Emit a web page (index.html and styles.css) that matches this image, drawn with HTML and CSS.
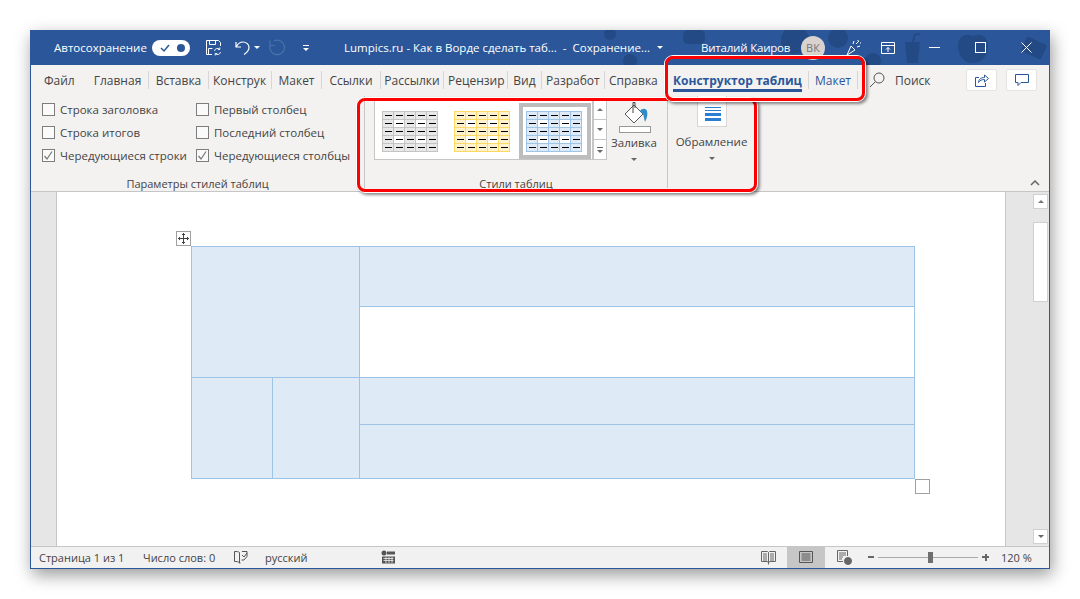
FILE: index.html
```html
<!DOCTYPE html>
<html lang="ru">

<head>
    <meta charset="UTF-8">
    <title>Lumpics.ru - Как в Ворде сделать таблицу</title>
    <link rel="stylesheet" href="styles.css">
</head>

<body>
    <div class="window">
        <!-- title bar -->
        <div class="titlebar">
            <svg class="doodles" width="460" height="35" viewBox="0 0 460 35">
                <g fill="#244a85">
                    <rect x="93" y="0" width="22" height="14" rx="5"/>
                    <circle cx="40" cy="31" r="7"/>
                    <circle cx="20" cy="4" r="6"/>
                    <circle cx="205" cy="10" r="14"/>
                    <circle cx="248" cy="8" r="10"/>
                    <circle cx="283" cy="31" r="8"/>
                    <path d="M315 12h15l-2 21h-11zM322 12l2-8 6-1 .5 1.500-5 1-1.500 6.500z"/>
                    <path d="M383 6c9-4 16 2 15 12-1 9-7 15-15 15s-14-6-15-15c-1-10 6-16 15-12z"/>
                    <rect x="433" y="10" width="22" height="16" rx="2" transform="rotate(25 444 18)"/>
                </g>
            </svg>
            <span class="autosave">Автосохранение</span>
            <span class="toggle">
                <svg width="12" height="10" viewBox="0 0 12 10"><path d="M2 5l3 3 5-6" fill="none" stroke="#2b579a" stroke-width="1.500"/></svg>
                <i class="toggle-dot"></i>
            </span>
            <svg class="qa-save" width="17" height="17" viewBox="0 0 17 17" fill="none" stroke="#fff">
                <path d="M7 15.500H1.500v-14h12l2 2V7M4.500 1.500v4h6v-4M3.500 15.500V9.500h4"/>
                <path d="M9.500 12a3 3 0 0 1 5.200-1.600M15.500 13a3 3 0 0 1-5.200 1.600M14.800 8.500v2h-2M10.200 16.500v-2h2" stroke-width=".9"/>
            </svg>
            <svg class="qa-undo" width="16" height="16" viewBox="0 0 16 16" fill="none" stroke="#fff" stroke-width="1.200">
                <path d="M1 2v5h5M1.500 6.500C3 3.500 5.500 2 8 2c3.500 0 6 2.500 6 5.500 0 3-2 5-5 7"/>
            </svg>
            <i class="caret caret-white qa-caret"></i>
            <svg class="qa-redo" width="18" height="17" viewBox="0 0 18 17" fill="none" stroke="#4a72ab" stroke-width="1.200">
                <path d="M6 1.800A7.300 7.300 0 1 1 2 7M2 1.500v5h5"/>
            </svg>
            <span class="qa-custom"><i class="dash"></i><i class="caret caret-white"></i></span>
            <span class="doc-title">Lumpics.ru - Как в Ворде сделать таб...&nbsp; - &nbsp;Сохранение...</span>
            <i class="caret caret-white title-caret"></i>
            <span class="user">Виталий Каиров</span>
            <span class="avatar">ВК</span>
            <svg class="tb-wand" width="16" height="17" viewBox="0 0 16 17" fill="none" stroke="#fff">
                <path d="M1 16l4-9 4 4zM7 5l1-3M11 8l3-1M10 5l3-3M12 1v1M15 4h-1"/>
            </svg>
            <svg class="tb-display" width="14" height="12" viewBox="0 0 14 12" fill="none" stroke="#fff">
                <path d="M.5.500h13v11H.5zM.5 3.500h13M7 10V5.500M5 7.500l2-2 2 2"/>
            </svg>
            <i class="tb-min"></i>
            <i class="tb-max"></i>
            <svg class="tb-close" width="11" height="11" viewBox="0 0 11 11" stroke="#fff"><path d="M.5.500l10 10M10.500.500l-10 10"/></svg>
        </div>

        <!-- tabs -->
        <div class="tabs">
            <div class="tabs-list">
                <a class="tab tab-plain tab-file">Файл</a>
                <a class="tab">Главная</a>
                <a class="tab">Вставка</a>
                <a class="tab tab-cut">Конструк</a>
                <a class="tab">Макет</a>
                <a class="tab">Ссылки</a>
                <a class="tab">Рассылки</a>
                <a class="tab tab-cut">Рецензир</a>
                <a class="tab">Вид</a>
                <a class="tab tab-cut">Разработ</a>
                <a class="tab tab-plain">Справка</a>
                <a class="tab tab-context"><b>Конструктор таблиц</b></a>
                <a class="tab tab-blue">Макет</a>
            </div>
            <svg class="search-icon" width="16" height="16" viewBox="0 0 16 16" fill="none" stroke="#555">
                <circle cx="10" cy="6" r="5"/><path d="M6.500 9.500L1 15"/>
            </svg>
            <span class="search-text">Поиск</span>
            <span class="tab-btn tab-btn-share">
                <svg width="16" height="15" viewBox="0 0 16 15" fill="none" stroke="#2b579a">
                    <path d="M5 4.500H1.500v9h10V10M4.500 9.500c0-3 2.500-5 6-5V2l4 3.500-4 3.500V6.500c-3 0-4.500 1-6 3z"/>
                </svg>
            </span>
            <span class="tab-btn tab-btn-comment">
                <svg width="14" height="13" viewBox="0 0 14 13" fill="none" stroke="#2b579a">
                    <path d="M.5.500h13v8H6l-3 3v-3H.5z"/>
                </svg>
            </span>
        </div>

        <!-- ribbon -->
        <div class="ribbon">
            <div class="group group-options">
                <div class="options">
                    <label class="opt"><i class="box"></i>Строка заголовка</label>
                    <label class="opt"><i class="box"></i>Первый столбец</label>
                    <label class="opt"><i class="box"></i>Строка итогов</label>
                    <label class="opt"><i class="box"></i>Последний столбец</label>
                    <label class="opt"><i class="box box-on"><svg width="11" height="11" viewBox="0 0 11 11"><path d="M1.500 6l2.500 3 5-7.500" fill="none" stroke="#777" stroke-width="1.200"/></svg></i>Чередующиеся строки</label>
                    <label class="opt"><i class="box box-on"><svg width="11" height="11" viewBox="0 0 11 11"><path d="M1.500 6l2.500 3 5-7.500" fill="none" stroke="#777" stroke-width="1.200"/></svg></i>Чередующиеся столбцы</label>
                </div>
                <div class="group-label">Параметры стилей таблиц</div>
            </div>

            <div class="group group-styles">
                <div class="styles-body">
                    <div class="gallery">
                        <div class="gal-item">
                            <div class="swatch swatch-gray"><i></i><i></i><i></i><i></i><i></i><i></i><i></i><i></i><i></i><i></i><i></i><i></i><i></i><i></i><i></i><i></i><i></i><i></i><i></i><i></i><i></i><i></i><i></i><i></i><i></i></div>
                        </div>
                        <div class="gal-item">
                            <div class="swatch swatch-gold"><i></i><i></i><i></i><i></i><i></i><i></i><i></i><i></i><i></i><i></i><i></i><i></i><i></i><i></i><i></i><i></i><i></i><i></i><i></i><i></i><i></i><i></i><i></i><i></i><i></i></div>
                        </div>
                        <div class="gal-item gal-item-on">
                            <div class="swatch swatch-blue"><i></i><i></i><i></i><i></i><i></i><i></i><i></i><i></i><i></i><i></i><i></i><i></i><i></i><i></i><i></i><i></i><i></i><i></i><i></i><i></i><i></i><i></i><i></i><i></i><i></i></div>
                        </div>
                    </div>
                    <div class="gal-scroll">
                        <span class="gal-btn"><i class="caret caret-up"></i></span>
                        <span class="gal-btn"><i class="caret"></i></span>
                        <span class="gal-btn gal-btn-more"><i class="dash dash-gray"></i><i class="caret"></i></span>
                    </div>
                    <div class="fill-btn">
                        <svg width="36" height="36" viewBox="0 0 36 36">
                            <path d="M18 6l9 9-9 9-9-9z" fill="#fff" stroke="#555"/>
                            <path d="M17 3.500V14M19 3.500V9M17 3.500h2" fill="none" stroke="#444"/>
                            <path d="M24 12c2-3 6-3 7 0 1 3 0 7-2 11-1-3-1-6-2-8-1-1-2-1-3-3z" fill="#2e8ccb"/>
                            <rect x="3.500" y="27.500" width="31" height="6" fill="#fff" stroke="#999"/>
                        </svg>
                        <span>Заливка</span>
                        <i class="caret"></i>
                    </div>
                </div>
                <div class="group-label">Стили таблиц</div>
            </div>

            <div class="group group-borders">
                <div class="border-btn">
                    <span class="border-icon"><i></i><i></i><i class="thick"></i><i class="thick"></i></span>
                    <span>Обрамление</span>
                    <i class="caret"></i>
                </div>
            </div>

            <svg class="collapse" width="10" height="6" viewBox="0 0 10 6" fill="none" stroke="#666" stroke-width="1.500"><path d="M1 5l4-4 4 4"/></svg>
        </div>

        <!-- document -->
        <div class="doc">
            <div class="page">
                <div class="table-wrap">
                    <span class="move-handle">
                        <svg width="11" height="11" viewBox="0 0 11 11" fill="none" stroke="#444"><path d="M5.500 0v11M0 5.500h11M4 1.500h3M4 9.500h3M1.500 4v3M9.500 4v3"/></svg>
                    </span>
                    <table class="word-table">
                        <colgroup><col class="c1"><col class="c2"><col class="c3"></colgroup>
                        <tr class="r1"><td class="shade" colspan="2" rowspan="2"></td><td class="shade"></td></tr>
                        <tr class="r2"><td></td></tr>
                        <tr class="r3"><td class="shade" rowspan="2"></td><td class="shade" rowspan="2"></td><td class="shade"></td></tr>
                        <tr class="r4"><td class="shade"></td></tr>
                    </table>
                    <span class="size-handle"></span>
                </div>
            </div>
            <div class="scroll">
                <span class="scroll-btn"><i class="caret caret-up"></i></span>
                <span class="scroll-thumb"></span>
                <span class="scroll-btn scroll-btn-down"><i class="caret"></i></span>
            </div>
        </div>

        <!-- status bar -->
        <div class="status">
            <span class="st-page">Страница 1 из 1</span>
            <span class="st-words">Число слов: 0</span>
            <svg class="st-proof" width="15" height="14" viewBox="0 0 15 14" fill="none" stroke="#555">
                <path d="M6.500 2.500c-1-1-3-1-5-1v10c2 0 4 0 5 1.500v-10.500zM6.500 13h1M9 1.500h5v5L11 10H8.500M9 5l2 2 3-4"/>
            </svg>
            <span class="st-lang">русский</span>
            <svg class="st-macro" width="14" height="14" viewBox="0 0 14 14">
                <circle cx="3" cy="3" r="2.500" fill="#555"/>
                <path d="M6 1.500h8v3H6zM1 6.500h13v7H1z" fill="#555"/>
                <path d="M2.500 8.500h10M2.500 10.500h10M5 7v6M8 7v6M11 7v6" stroke="#f1f1f1" stroke-width=".8"/>
            </svg>
            <svg class="st-read" width="15" height="15" viewBox="0 0 15 15" fill="none" stroke="#666">
                <path d="M.5 1.500h6l1 1 1-1h6v10h-6l-1 1.500-1-1.500h-6zM7.500 2.500v12M2 4h4M2 6h4M2 8h4M2 10h4M9 4h4M9 6h4M9 8h4M9 10h4"/>
            </svg>
            <span class="st-active">
                <svg width="14" height="12" viewBox="0 0 14 12" fill="none" stroke="#555"><path d="M.5.500h13v11H.5zM2.500 3h9M2.500 5h9M2.500 7h9M2.500 9h9"/></svg>
            </span>
            <svg class="st-web" width="15" height="15" viewBox="0 0 15 15" fill="none" stroke="#666">
                <path d="M6 11.500H.5V.5h10V6M2 3h7M2 5h7M2 7h4M2 9h3"/>
                <circle cx="11" cy="11" r="3.500" fill="#666"/>
            </svg>
            <i class="zoom-minus"></i>
            <span class="zoom-track"><i class="zoom-thumb"></i></span>
            <span class="zoom-plus"></span>
            <span class="st-zoom">120 %</span>
        </div>

        <!-- callouts drawn on top of the screenshot -->
        <div class="callout callout-styles"></div>
        <div class="callout callout-tabs"></div>
    </div>
</body>

</html>
```

FILE: styles.css
```css
* {
    margin: 0;
    padding: 0;
    box-sizing: border-box;
}

body {
    background-color: #fff;
    font-family: "Open Sans", "Noto Sans", sans-serif;
    font-size: 11.5px;
    color: #444;
}

i {
    display: block;
}

.window {
    position: relative;
    display: flex;
    flex-direction: column;
    width: 1020px;
    height: 539px;
    margin: 30px;
    border: 1px solid #2b579a;
    background-color: #f3f2f1;
    box-shadow: 2px 6px 16px rgba(0, 0, 0, 0.4);
}

.caret {
    width: 0;
    height: 0;
    border-left: 3px solid transparent;
    border-right: 3px solid transparent;
    border-top: 3px solid #666;
}

.caret-white {
    border-top-color: #fff;
}

.caret-up {
    border-top: 0;
    border-bottom: 3px solid #777;
}

.dash {
    width: 6px;
    height: 1px;
    margin-bottom: 2px;
    background-color: #fff;
}

.dash-gray {
    background-color: #666;
}

/* title bar */
.titlebar {
    position: relative;
    display: flex;
    align-items: center;
    height: 35px;
    flex: none;
    margin-top: -1px;
    background-color: #2b579a;
    color: #fff;
    font-size: 12px;
}

.titlebar > * {
    flex: none;
    position: relative;
}

.titlebar > .doodles {
    position: absolute;
    left: 559px;
    top: 0;
}

.autosave {
    margin-left: 23px;
    width: 98px;
    font-size: 11.500px;
}

.toggle {
    display: flex;
    align-items: center;
    justify-content: space-between;
    width: 38px;
    height: 16px;
    padding: 0 5px 0 7px;
    border-radius: 8px;
    background-color: #fff;
}

.toggle-dot {
    width: 8px;
    height: 8px;
    border-radius: 50%;
    background-color: #2b579a;
}

.qa-save {
    margin-left: 15px;
}

.qa-undo {
    margin-left: 13px;
}

.qa-caret {
    margin-left: 3px;
}

.qa-redo {
    margin-left: 8px;
}

.qa-custom {
    margin-left: 17px;
}

.doc-title {
    margin-left: 35px;
    width: 313px;
    font-size: 11.500px;
    white-space: nowrap;
}

.user {
    margin-left: 38px;
    width: 100px;
    font-size: 11.500px;
    letter-spacing: -0.2px;
    white-space: nowrap;
}

.avatar {
    display: flex;
    align-items: center;
    justify-content: center;
    width: 24px;
    height: 24px;
    border-radius: 50%;
    background-color: #d8d3cf;
    color: #777;
    font-size: 11px;
}

.tb-wand {
    margin-left: 21px;
}

.tb-display {
    margin-left: 19px;
}

.tb-min {
    width: 11px;
    height: 1px;
    margin-left: 34px;
    background-color: #fff;
}

.tb-max {
    width: 11px;
    height: 11px;
    margin-left: 35px;
    border: 1px solid #fff;
}

.tb-close {
    margin-left: 35px;
}

/* tabs */
.tabs {
    display: flex;
    align-items: center;
    height: 30px;
    flex: none;
    font-size: 12px;
}

.tabs-list {
    display: grid;
    grid-template-columns: 56px 62px 60px 63px 50px 59px 63px 64px 34px 63px 59px 144px 50px;
    align-items: center;
    flex: none;
}

.tab {
    height: 18px;
    line-height: 19px;
    border-right: 1px solid #d8d6d4;
    text-align: center;
    white-space: nowrap;
}

.tab-plain {
    border-right: 0;
    padding-left: 4px;
    text-align: left;
}

.tab-file {
    padding-left: 13px;
}

.tab-cut {
    padding-left: 4px;
    text-align: left;
}

.tab-context {
    height: 24px;
    padding-left: 9px;
    border-right: 0;
    text-align: left;
    color: #2b579a;
}

.tab-context b {
    display: block;
    width: 129px;
    height: 24px;
    line-height: 25px;
    border-bottom: 3px solid #2b579a;
    font-size: 12px;
}

.tab-blue {
    border-left: 1px solid #d8d6d4;
    color: #2b579a;
}

.search-icon {
    margin-left: 11px;
}

.search-text {
    margin-left: 10px;
    width: 71px;
}

.tab-btn {
    display: flex;
    align-items: center;
    justify-content: center;
    height: 22px;
    border: 1px solid #e6e4e2;
    border-radius: 2px;
    background-color: #fff;
}

.tab-btn-share {
    width: 31px;
}

.tab-btn-comment {
    width: 31px;
    margin-left: 9px;
}

/* ribbon */
.ribbon {
    position: relative;
    display: flex;
    height: 97px;
    flex: none;
    border-bottom: 1px solid #c6c6c6;
}

.group {
    display: flex;
    flex-direction: column;
    justify-content: space-between;
    height: 92px;
    margin-top: 1px;
    border-right: 1px solid #c8c6c4;
}

.group-label {
    height: 15px;
    margin-bottom: -4px;
    line-height: 13px;
    font-size: 11px;
    text-align: center;
    white-space: nowrap;
}

.group-options {
    width: 334px;
}

.options {
    display: grid;
    grid-template-columns: 154px 1fr;
    grid-auto-rows: 23px;
    padding: 6px 0 0 11px;
}

.opt {
    display: flex;
    align-items: center;
    gap: 5px;
    height: 15px;
    font-size: 11.500px;
    white-space: nowrap;
}

.box {
    display: flex;
    align-items: center;
    justify-content: center;
    width: 13px;
    height: 13px;
    flex: none;
    border: 1px solid #7d7d7d;
    background-color: #fafafa;
}

.group-styles {
    width: 303px;
}

.styles-body {
    display: flex;
    padding: 3px 0 0 9px;
}

.gallery {
    display: flex;
    width: 219px;
    height: 61px;
    padding: 3px 0 1px 0;
    border: 1px solid #c6c6c6;
    background-color: #fff;
}

.gal-item {
    display: flex;
    align-items: center;
    justify-content: center;
    width: 72px;
    height: 56px;
    padding-right: 2px;
}

.gal-item-on {
    border: 4px solid #bdbdbd;
}

.swatch {
    display: grid;
    grid-template-columns: repeat(5, 1fr);
    grid-template-rows: repeat(5, 1fr);
    width: 56px;
    height: 41px;
    flex: none;
    border: 1px solid;
    gap: 1px;
}

.swatch i {
    position: relative;
}

.swatch i::after {
    content: "";
    position: absolute;
    left: 2px;
    right: 1px;
    top: 3px;
    height: 1px;
    background-color: #000;
}

.swatch-gray {
    border-color: #c4c4c4;
    background-color: #c4c4c4;
}

.swatch-gray i {
    background-color: #e8e8e8;
}

.swatch-gold {
    border-color: #ffd966;
    background-color: #ffd966;
}

.swatch-gold i {
    background-color: #fff2cc;
}

.swatch-blue {
    border-color: #9dc3e6;
    background-color: #9dc3e6;
}

.swatch-blue i {
    background-color: #deeaf6;
}

.swatch i:nth-child(7),
.swatch i:nth-child(9),
.swatch i:nth-child(17),
.swatch i:nth-child(19) {
    background-color: #fff;
}

.gal-scroll {
    display: flex;
    flex-direction: column;
    width: 14px;
    height: 61px;
    border: 1px solid #c6c6c6;
    border-left: 0;
    background-color: #fff;
}

.gal-btn {
    display: flex;
    flex-direction: column;
    align-items: center;
    justify-content: center;
    flex: 1;
    border-left: 1px solid #c6c6c6;
    border-bottom: 1px solid #c6c6c6;
}

.gal-btn-more {
    border-bottom: 0;
}

.fill-btn,
.border-btn {
    display: flex;
    flex-direction: column;
    align-items: center;
    font-size: 11.500px;
}

.fill-btn {
    width: 54px;
    line-height: 16px;
}

.fill-btn .caret {
    margin-top: 7px;
}

.group-borders {
    width: 88px;
    border-right: 0;
    justify-content: flex-start;
}

.border-btn {
    width: 87px;
}

.border-icon {
    display: flex;
    flex-direction: column;
    gap: 2px;
    justify-content: flex-end;
    width: 30px;
    height: 31px;
    padding: 0 5px 5px 7px;
    border: 1px solid #d8d6d4;
    border-top: 0;
    background-color: #fff;
}

.border-icon i {
    height: 1px;
    background-color: #2b7cd3;
}

.border-icon i.thick {
    height: 3px;
}

.border-btn span:nth-child(2) {
    margin-top: 7px;
    line-height: 16px;
}

.border-btn .caret {
    margin-top: 7px;
}

.collapse {
    position: absolute;
    right: 9px;
    bottom: 5px;
}

/* document */
.doc {
    display: flex;
    flex: 1;
    min-height: 0;
    background-color: #e6e6e6;
}

.page {
    width: 950px;
    margin-left: 25px;
    padding: 54px 0 0 134px;
    border-left: 1px solid #c6c6c6;
    border-right: 1px solid #c6c6c6;
    background-color: #fff;
}

.table-wrap {
    position: relative;
    width: 724px;
}

.word-table {
    width: 724px;
    table-layout: fixed;
    border-collapse: collapse;
}

.word-table td {
    border: 1px solid #9dc3e6;
}

.word-table td.shade {
    background-color: #deeaf6;
}

.c1 {
    width: 81px;
}

.c2 {
    width: 87px;
}

.r1 {
    height: 60px;
}

.r2 {
    height: 71px;
}

.r3 {
    height: 47px;
}

.r4 {
    height: 54px;
}

.move-handle {
    position: absolute;
    left: -15px;
    top: -15px;
    display: flex;
    align-items: center;
    justify-content: center;
    width: 15px;
    height: 15px;
    border: 1px solid #a0a0a0;
    background-color: #fff;
}

.size-handle {
    position: absolute;
    left: 724px;
    top: 233px;
    width: 15px;
    height: 15px;
    border: 1px solid #a0a0a0;
}

.scroll {
    display: flex;
    flex-direction: column;
    align-items: center;
    width: 15px;
    margin-left: 27px;
    padding: 2px 0;
}

.scroll-btn {
    display: flex;
    align-items: center;
    justify-content: center;
    width: 15px;
    height: 15px;
    flex: none;
    border: 1px solid #d0d0d0;
    background-color: #fff;
}

.scroll-thumb {
    width: 15px;
    height: 80px;
    margin-top: 13px;
    border: 1px solid #d0d0d0;
    background-color: #fff;
}

.scroll-btn-down {
    margin-top: auto;
}

/* status bar */
.status {
    display: flex;
    align-items: center;
    height: 22px;
    flex: none;
    padding-bottom: 1px;
    border-top: 1px solid #c6c6c6;
    background-color: #f1f1f1;
    font-size: 11px;
    white-space: nowrap;
}

.status > * {
    flex: none;
}

.st-page {
    width: 85px;
    margin-left: 8px;
}

.st-words {
    width: 72px;
    margin-left: 19px;
}

.st-proof {
    margin-left: 18px;
}

.st-lang {
    width: 43px;
    margin-left: 17px;
}

.st-macro {
    margin-left: 73px;
}

.st-read {
    margin-left: 366px;
}

.st-active {
    display: flex;
    align-items: center;
    justify-content: center;
    width: 38px;
    height: 21px;
    margin-left: 11px;
    background-color: #c6c6c6;
}

.st-web {
    margin-left: 12px;
}

.zoom-minus {
    width: 6px;
    height: 2px;
    margin-left: 16px;
    background-color: #666;
}

.zoom-track {
    position: relative;
    width: 100px;
    height: 1px;
    margin-left: 4px;
    background-color: #aaa;
}

.zoom-thumb {
    position: absolute;
    left: 50px;
    top: -5px;
    width: 5px;
    height: 11px;
    background-color: #6f6f6f;
}

.zoom-plus {
    width: 7px;
    height: 7px;
    margin-left: 4px;
    background:
        linear-gradient(#666, #666) center / 7px 2px no-repeat,
        linear-gradient(#666, #666) center / 2px 7px no-repeat;
}

.st-zoom {
    width: 40px;
    margin-left: 12px;
}

/* red callouts */
.callout {
    position: absolute;
    border: 3px solid #f00;
    border-radius: 8px;
    box-shadow: 0 0 0 1px #fff, 2px 2px 3px 1px rgba(0, 0, 0, 0.45);
}

.callout-styles {
    left: 326px;
    top: 67px;
    width: 400px;
    height: 94px;
}

.callout-tabs {
    left: 634px;
    top: 25px;
    width: 200px;
    height: 45px;
}
```
